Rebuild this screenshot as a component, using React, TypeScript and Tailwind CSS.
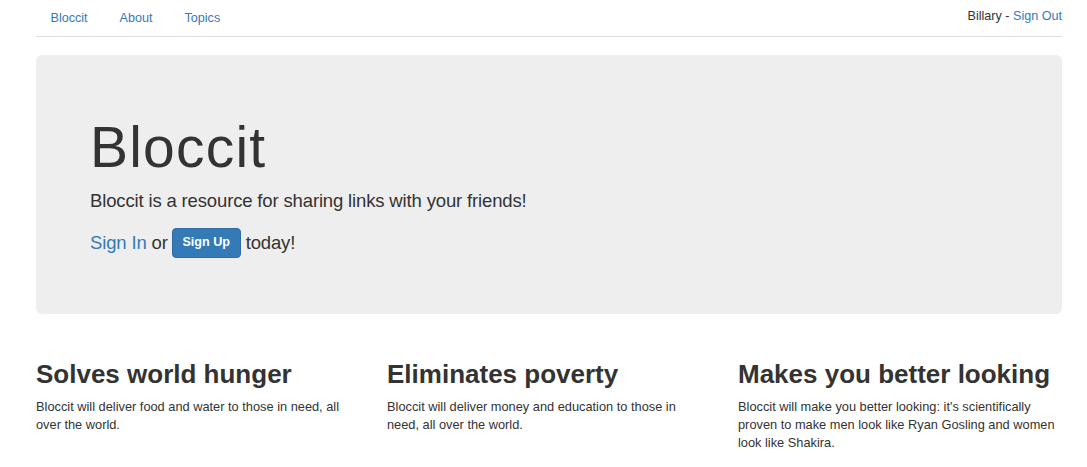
import React from "react";

export default function App() {
  return (
    <div
      className="min-h-screen bg-white text-[#333] text-[12.8px] leading-[18px]"
      style={{ fontFamily: '"Liberation Sans", Arial, sans-serif' }}
    >
      <div className="ml-[36px] w-[1026px]">
        {/* Nav */}
        <div className="flex items-start justify-between border-b border-[#ddd] h-[37px]">
          <div className="flex gap-[3px] text-[12.6px]">
            <a className="block px-[14.5px] pt-[9px] pb-[10px] text-[#337ab7]">Bloccit</a>
            <a className="block px-[14.5px] pt-[9px] pb-[10px] text-[#337ab7]">About</a>
            <a className="block px-[14.5px] pt-[9px] pb-[10px] text-[#337ab7]">Topics</a>
          </div>
          <div className="pt-[7px] text-[12.6px]">
            Billary - <a className="text-[#337ab7]">Sign Out</a>
          </div>
        </div>

        {/* Jumbotron */}
        <div className="mt-[18px] rounded-[6px] bg-[#eee] px-[54px] pt-[43px] pb-[43px]">
          <h1 className="mt-[18px] mb-[9px] text-[57px] leading-[62px] tracking-[1.2px] font-normal">Bloccit</h1>
          <p className="mb-[13.5px] text-[18.5px] leading-[27px] tracking-[-0.15px]">
            Bloccit is a resource for sharing links with your friends!
          </p>
          <p className="text-[18.5px] leading-[27px] tracking-[-0.15px] flex items-center h-[30px]">
            <a className="text-[#337ab7]">Sign In</a>
            <span className="ml-[5px]">or</span>
            <span className="ml-[4px] inline-flex items-center justify-center h-[30px] w-[69px] rounded-[4px] border border-[#2e6da4] bg-[#337ab7] text-white text-[12.6px] tracking-normal font-bold">
              Sign Up
            </span>
            <span className="ml-[5px]">today!</span>
          </p>
          <div className="h-[13.5px]" />
        </div>

        {/* Features */}
        <div className="mt-[27px] grid grid-cols-3 gap-[27px]">
          <div>
            <h2 className="mt-[18px] mb-[9px] text-[26px] leading-[30px] font-bold whitespace-nowrap">Solves world hunger</h2>
            <p>Bloccit will deliver food and water to those in need, all over the world.</p>
          </div>
          <div>
            <h2 className="mt-[18px] mb-[9px] text-[26px] leading-[30px] font-bold whitespace-nowrap">Eliminates poverty</h2>
            <p>Bloccit will deliver money and education to those in need, all over the world.</p>
          </div>
          <div>
            <h2 className="mt-[18px] mb-[9px] text-[26px] leading-[30px] font-bold whitespace-nowrap">Makes you better looking</h2>
            <p>
              Bloccit will make you better looking: it's scientifically proven to make men look like Ryan
              Gosling and women look like Shakira.
            </p>
          </div>
        </div>
      </div>
    </div>
  );
}
